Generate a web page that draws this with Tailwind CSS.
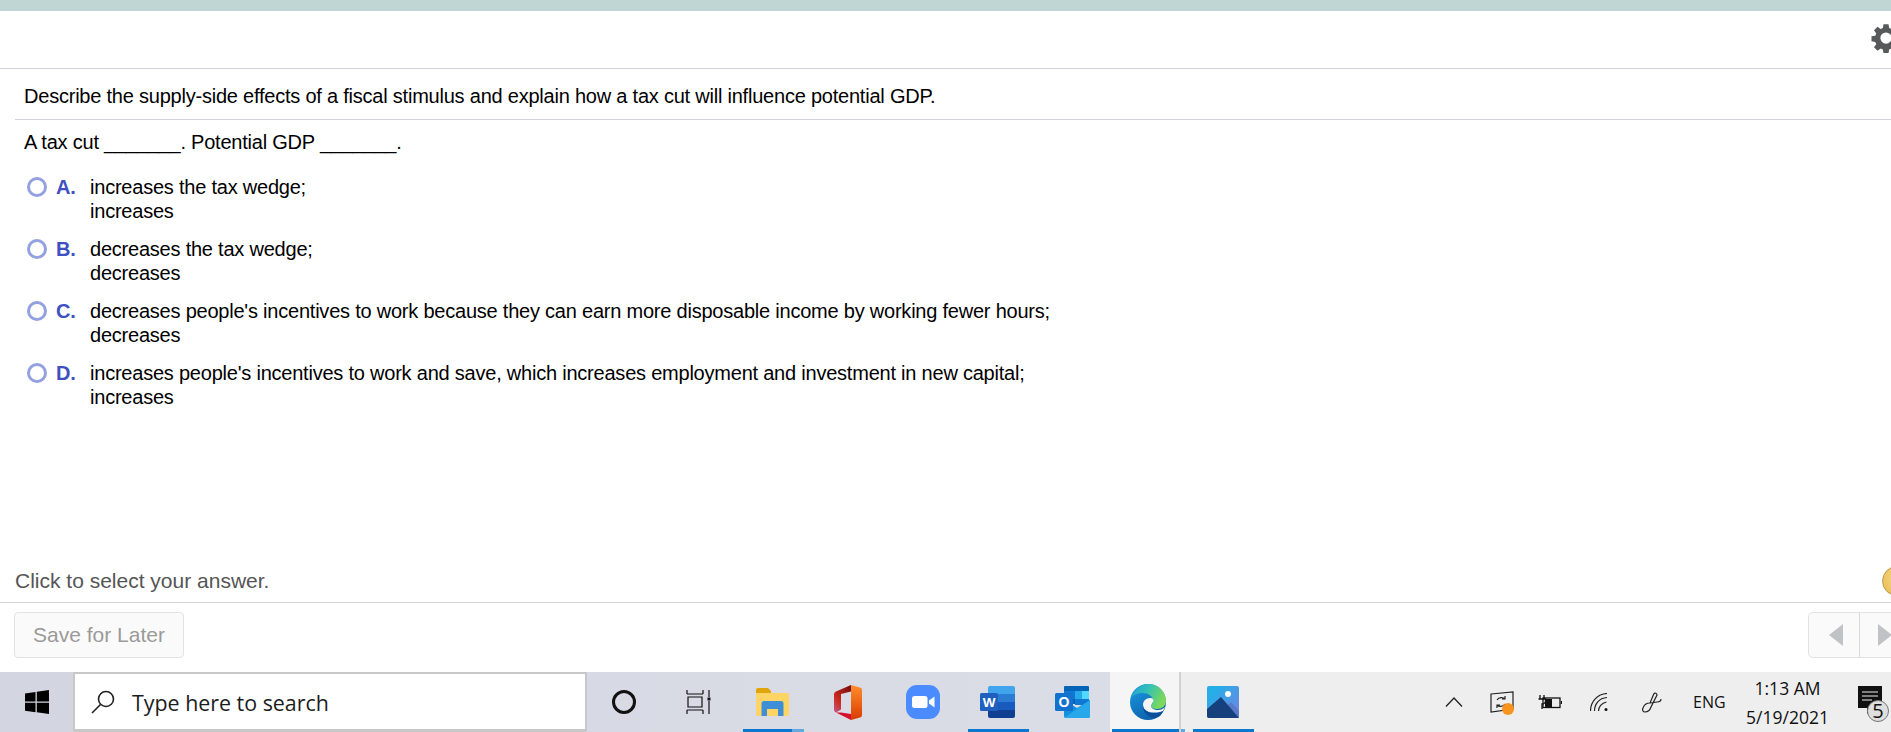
<!DOCTYPE html>
<html lang="en">
<head>
<meta charset="UTF-8">
<title>Question</title>
<script src="https://cdn.jsdelivr.net/npm/@tailwindcss/browser@4"></script>
</head>
<body class="bg-white overflow-hidden">
<div class="h-[732px] w-full flex flex-col overflow-hidden font-['Liberation_Sans',sans-serif] text-black">
    <div class="h-[11px] bg-[#bfd6d4]"></div>

    <!-- toolbar -->
    <div class="h-[58px] border-b border-[#d0d3dc] flex justify-end items-center overflow-hidden">
        <svg class="w-[30px] h-[30px] shrink-0 -mr-[10px] mt-[-3px]" viewBox="0 0 24 24" fill="#58595b"><path fill-rule="evenodd" d="M10 1h4l.5 3 1.8.8 2.5-1.8 2.8 2.8-1.8 2.5.8 1.8 3 .5v4l-3 .5-.8 1.8 1.8 2.5-2.8 2.8-2.5-1.8-1.8.8-.5 3h-4l-.5-3-1.8-.8-2.5 1.8-2.8-2.8 1.8-2.5-.8-1.8-3-.5v-4l3-.5.8-1.8-1.8-2.5 2.8-2.8 2.5 1.8 1.8-.8zM12 7.500a4.500 4.500 0 1 0 0 9 4.500 4.500 0 0 0 0-9z"/></svg>
    </div>

    <!-- question -->
    <div class="ml-[15px] border-b border-[#d0d3dc] h-[51px] pl-[9px] pt-[3px] flex items-center text-[20px] tracking-[-0.22px]">
        Describe the supply-side effects of a fiscal stimulus and explain how a tax cut will influence potential GDP.
    </div>

    <div class="flex-1 pl-[24px] pt-[10px] text-[20px] leading-[24px] tracking-[-0.22px]">
        <p class="h-[24px]">A tax cut _______. Potential GDP _______.</p>
        <div class="mt-[21px] flex flex-col gap-[14px]">
            <div class="flex h-[48px]">
                <span class="w-[20px] h-[20px] mt-[2px] ml-[3px] rounded-full border-[3px] border-[#94a1e0] bg-white shrink-0"></span>
                <span class="w-[43px] pl-[9px] font-bold text-[#3f51c0] shrink-0">A.</span>
                <span>increases the tax wedge;<br>increases</span>
            </div>
            <div class="flex h-[48px]">
                <span class="w-[20px] h-[20px] mt-[2px] ml-[3px] rounded-full border-[3px] border-[#94a1e0] bg-white shrink-0"></span>
                <span class="w-[43px] pl-[9px] font-bold text-[#3f51c0] shrink-0">B.</span>
                <span>decreases the tax wedge;<br>decreases</span>
            </div>
            <div class="flex h-[48px]">
                <span class="w-[20px] h-[20px] mt-[2px] ml-[3px] rounded-full border-[3px] border-[#94a1e0] bg-white shrink-0"></span>
                <span class="w-[43px] pl-[9px] font-bold text-[#3f51c0] shrink-0">C.</span>
                <span>decreases people's incentives to work because they can earn more disposable income by working fewer hours;<br>decreases</span>
            </div>
            <div class="flex h-[48px]">
                <span class="w-[20px] h-[20px] mt-[2px] ml-[3px] rounded-full border-[3px] border-[#94a1e0] bg-white shrink-0"></span>
                <span class="w-[43px] pl-[9px] font-bold text-[#3f51c0] shrink-0">D.</span>
                <span>increases people's incentives to work and save, which increases employment and investment in new capital;<br>increases</span>
            </div>
        </div>
    </div>

    <!-- status -->
    <div class="h-[44px] border-b border-[#d0d3dc] pl-[15px] flex items-center justify-between overflow-hidden">
        <span class="text-[21px] text-[#555555]">Click to select your answer.</span>
        <span class="w-[30px] h-[30px] rounded-full shrink-0 -mr-[21px] border border-[#b89b4e] bg-[radial-gradient(circle_at_60%_40%,#f8dc8c,#e8b84f)]"></span>
    </div>

    <!-- footer buttons -->
    <div class="h-[69px] pl-[14px] pt-[9px] flex justify-between overflow-hidden">
        <div class="w-[170px] h-[46px] rounded-[4px] border border-[#e2e2e2] bg-[#fafafa] flex items-center justify-center text-[21px] text-[#9a9a9a]">Save for Later</div>
        <div class="w-[110px] h-[46px] rounded-l-[5px] border border-[#e2e2e2] bg-[#fafafa] flex shrink-0 -mr-[27px]">
            <div class="w-[51px] border-r border-[#d8d8d8] flex items-center justify-center pl-[3px]">
                <svg width="14" height="22" viewBox="0 0 14 22" fill="#c0c2c5"><path d="M14 0v22L0 11z"/></svg>
            </div>
            <div class="flex-1 pl-[18px] flex items-center">
                <svg width="14" height="22" viewBox="0 0 14 22" fill="#c0c2c5"><path d="M0 0v22l14-11z"/></svg>
            </div>
        </div>
    </div>

    <!-- windows taskbar -->
    <div class="h-[60px] bg-linear-to-r from-[#d3d6e1] to-[#e0e2ea] flex font-['Open_Sans',sans-serif]">
        <div class="w-[73px] flex items-center justify-center">
            <svg width="24" height="24" viewBox="0 0 24 24" fill="#000"><path d="M0 3.400l10.500-1.500V11.500H0zM11.800 1.700L24 0v11.500H11.800zM0 12.700h10.500v9.500L0 20.700zM11.800 12.700H24V24l-12.200-1.700z"/></svg>
        </div>
        <div class="w-[514px] border-2 border-b-[3px] border-[#c8c8c8] bg-white flex items-center pl-[15px]">
            <svg width="26" height="26" viewBox="0 0 26 26" fill="none" stroke="#222" stroke-width="1.6"><circle cx="16" cy="10" r="7.500"/><path d="M10.500 15.500L2 24"/></svg>
            <span class="ml-[16px] mt-[4px] text-[21.4px] text-[#1c1c1c]">Type here to search</span>
        </div>
        <div class="w-[74px] flex items-center justify-center">
            <span class="w-[24px] h-[24px] rounded-full border-[3.5px] border-[#111]"></span>
        </div>
        <div class="w-[74px] flex items-center justify-center">
            <svg width="25" height="24" viewBox="0 0 25 24" fill="none" stroke="#111" stroke-width="1.2"><path d="M1 4h16M1 0v4M17 0v4M2 7h14v10H2zM1 20h16M1 20v4M17 20v4M23 0v7M23 11v13"/><rect x="21.500" y="7.500" width="3" height="3" fill="#111" stroke="none"/></svg>
        </div>
        <!-- file explorer -->
        <div class="w-[75px] relative flex items-center justify-center">
            <svg width="33" height="28" viewBox="0 0 33 28"><path d="M0 2a2 2 0 0 1 2-2h10l3 3v3H0z" fill="#dfa50a"/><path d="M0 5h31a2 2 0 0 1 2 2v19a2 2 0 0 1-2 2H2a2 2 0 0 1-2-2z" fill="#ffd465"/><path d="M8 13h17a2.500 2.500 0 0 1 2.500 2.500V28H22v-7H11v7H5.500V15.500A2.500 2.500 0 0 1 8 13z" fill="#3f8fd6"/></svg>
            <span class="absolute bottom-0 left-[8px] right-[6px] h-[3px] flex"><span class="flex-1 bg-[#0a78d0]"></span><span class="w-[12px] bg-[#62a9e2]"></span></span>
        </div>
        <!-- office -->
        <div class="w-[75px] flex items-center justify-center">
            <svg width="28" height="35" viewBox="0 0 28 35">
                <defs>
                    <linearGradient id="officeRight" x1="0" y1="0" x2="0" y2="1"><stop offset="0" stop-color="#ff8f2c"/><stop offset="1" stop-color="#d83b01"/></linearGradient>
                    <linearGradient id="officeLeft" x1="0.8" y1="0" x2="0" y2="1"><stop offset="0" stop-color="#7b1010"/><stop offset="0.6" stop-color="#cc2a1c"/><stop offset="1" stop-color="#c4588c"/></linearGradient>
                </defs>
                <path d="M17 0l9 2.500a2.500 2.500 0 0 1 2 2.500v25a2.500 2.500 0 0 1-2 2.500L17 35z" fill="url(#officeRight)"/>
                <path d="M17 0L2 6.500A3 3 0 0 0 0 9v16a3 3 0 0 0 2 2.500l5-3V9l10-2.500z" fill="url(#officeLeft)"/>
                <path d="M2 27.500l15 7.500V29L7 27.500z" fill="#d8102e"/>
            </svg>
        </div>
        <!-- zoom -->
        <div class="w-[75px] flex items-center justify-center">
            <svg width="34" height="34" viewBox="0 0 34 34"><rect width="34" height="34" rx="11" fill="#4a8cff"/><rect x="6" y="11" width="15.500" height="12" rx="2.500" fill="#fff"/><path d="M23 15.500l5.500-4v11l-5.500-4z" fill="#fff"/></svg>
        </div>
        <!-- word -->
        <div class="w-[75px] relative flex items-center justify-center">
            <svg width="35" height="32" viewBox="0 0 35 32"><path d="M8 2a2 2 0 0 1 2-2h23a2 2 0 0 1 2 2v6H8z" fill="#41a5ee"/><rect x="8" y="8" width="27" height="8" fill="#2b7cd3"/><rect x="8" y="16" width="27" height="8" fill="#185abd"/><path d="M8 24h27v6a2 2 0 0 1-2 2H10a2 2 0 0 1-2-2z" fill="#103f91"/><rect y="7" width="18" height="18" rx="1.500" fill="#1f5fc0"/><text x="9" y="21" text-anchor="middle" font-size="13.500" font-weight="700" fill="#fff" font-family="Liberation Sans">W</text></svg>
            <span class="absolute bottom-0 left-[8px] right-[6px] h-[3px] bg-[#0a78d0]"></span>
        </div>
        <!-- outlook -->
        <div class="w-[75px] flex items-center justify-center">
            <svg width="35" height="32" viewBox="0 0 35 32"><rect x="9" width="25" height="18" rx="1" fill="#0364b8"/><rect x="9" y="5" width="11" height="8" fill="#0f78d4"/><rect x="20" y="5" width="14" height="8" fill="#28a8ea"/><rect x="27" y="5" width="7" height="8" fill="#50d9ff"/><rect x="20" y="13" width="14" height="6" fill="#0f78d4"/><path d="M9 14l13 8 13-8v16a2 2 0 0 1-2 2H11a2 2 0 0 1-2-2z" fill="#1490df"/><path d="M35 14L9 32h24a2 2 0 0 0 2-2z" fill="#28a8ea"/><rect y="7" width="18" height="18" rx="1.500" fill="#1272cd"/><text x="9" y="21" text-anchor="middle" font-size="14" font-weight="700" fill="#fff" font-family="Liberation Sans">O</text></svg>
        </div>
        <!-- edge -->
        <div class="w-[69px] relative bg-[#f5f5f6] flex items-center justify-center pl-[6px]">
            <svg width="36" height="36" viewBox="0 0 36 36">
                <defs>
                    <linearGradient id="edgeBody" x1="0" y1="0" x2="0.5" y2="1"><stop offset="0" stop-color="#1b9de2"/><stop offset="1" stop-color="#0d62ad"/></linearGradient>
                    <linearGradient id="edgeTop" x1="0" y1="0" x2="1" y2="0.4"><stop offset="0" stop-color="#1b9de2"/><stop offset="0.5" stop-color="#35c1b4"/><stop offset="1" stop-color="#7bd85a"/></linearGradient>
                </defs>
                <circle cx="18" cy="18" r="18" fill="url(#edgeBody)"/>
                <path d="M1 14C5 4 12 0 19 0c10 0 17 8 17 17 0 5-4 8-9 8-3 0-6-1-6-3 0-1 2-2 2-5 0-5-5-8-10-8-5 0-10 2-12 5z" fill="url(#edgeTop)"/>
                <path d="M13 21c0-4 3-7 7-7 3 0 4 2 3 4-1 2-2 3-2 4 0 2 3 4 7 4 3 0 5-1 7-3l-2 4c-5 2-13 2-17 0-2-1-3-3-3-6z" fill="#f5f5f6"/>
                <path d="M13 21c-1 6 4 12 11 13 4 0 7-2 9-7-5 3-12 3-16 0-2-1-4-3-4-6z" fill="#0b4f9c"/>
            </svg>
            <span class="absolute bottom-0 left-[2px] right-0 h-[3px] bg-[#0a78d0]"></span>
        </div>
        <div class="w-[2px] bg-[#d2d2d2]"></div>
        <!-- right part -->
        <div class="flex-1 bg-[#eeeeee] flex items-center">
            <div class="w-[4px] self-stretch relative"><span class="absolute bottom-0 inset-x-0 h-[3px] bg-[#62a9e2]"></span></div>
            <div class="w-[75px] self-stretch relative flex items-center justify-center">
                <svg width="32" height="32" viewBox="0 0 32 32">
                    <defs>
                        <linearGradient id="photoSky" x1="0" y1="0" x2="1" y2="1"><stop offset="0.2" stop-color="#25aee8"/><stop offset="1" stop-color="#7b7fe0"/></linearGradient>
                    </defs>
                    <rect width="32" height="32" rx="2" fill="url(#photoSky)"/>
                    <path d="M18 22l6-6 8 9v5a2 2 0 0 1-2 2H20z" fill="#5a78c8"/>
                    <path d="M0 23l14-12 18 21H2a2 2 0 0 1-2-2z" fill="#16407c"/>
                    <circle cx="21" cy="8" r="3" fill="#fff"/>
                </svg>
                <span class="absolute bottom-0 left-[8px] right-[6px] h-[3px] bg-[#0a78d0]"></span>
            </div>
            <!-- tray -->
            <div class="ml-auto flex items-center h-full text-[#111] text-[16px]">
                <svg width="18" height="10" viewBox="0 0 18 10" fill="none" stroke="#222" stroke-width="1.3"><path d="M1 9.500L9 1l8 8.500"/></svg>
                <div class="relative ml-[27px] w-[24px] h-[23px]">
                    <svg width="24" height="23" viewBox="0 0 24 23" fill="none" stroke="#222" stroke-width="1.2"><path d="M1 3L23 1v17L1 21z"/><path d="M7 9c2-3 6-3 8-1M15 5v3h-3M15 13c-2 3-6 3-8 1M7 17v-3h3"/></svg>
                    <span class="absolute right-0 -bottom-[1px] w-[12px] h-[12px] rounded-full bg-[#f7941d]"></span>
                </div>
                <svg class="ml-[24px]" width="24" height="14" viewBox="0 0 24 14" fill="none" stroke="#111" stroke-width="1.3"><path d="M2 0v4M6 0v4M0.500 4h7v2c0 2-2 3-3.500 3v5"/><rect x="5" y="3" width="17" height="9.500"/><rect x="7" y="4" width="7" height="8" fill="#111" stroke="none"/><path d="M23.500 6v3"/></svg>
                <svg class="ml-[28px]" width="18" height="18" viewBox="0 0 18 18" fill="none" stroke="#222" stroke-width="1.2"><path d="M0.500 18C0.500 9 7 1 17 0.500M4.500 18C4.500 11 9 5 17 4.500M8.500 18c0-4 3-8 8-9"/><circle cx="16" cy="16.500" r="1.500" fill="#111" stroke="none"/></svg>
                <svg class="ml-[34px]" width="20" height="21" viewBox="0 0 20 21" fill="none" stroke="#222" stroke-width="1.2"><path d="M12 1.500c1-1 3 0 3 1.500L9 15c-1 3-3 5-6 5-2 0-3-2-2-4 1-3 4-5 7-5l7-1c2 0 4-1 4-3M12 1.500L8 11"/></svg>
                <span class="ml-[31px] w-[32px] text-center">ENG</span>
                <div class="ml-[22px] w-[81px] flex flex-col items-center leading-[29px] text-[17.500px] whitespace-nowrap">
                    <span class="mt-[1px]">1:13 AM</span>
                    <span>5/19/2021</span>
                </div>
                <div class="relative ml-[30px] mr-[9px] w-[24px] h-[34px] mt-[2px]">
                    <svg width="24" height="28" viewBox="0 0 24 28"><path d="M0 0h24v22h-10l-5 6v-6H0z" fill="#111"/><path d="M4 6h16M4 10h16M4 14h10" stroke="#eee" stroke-width="1.200"/></svg>
                    <span class="absolute -right-[7px] bottom-[-2px] w-[22px] h-[22px] rounded-full border-[1.5px] border-[#777] bg-[#dedede] flex items-center justify-center text-[20px] leading-none">5</span>
                </div>
            </div>
        </div>
    </div>
</div>
</body>
</html>
